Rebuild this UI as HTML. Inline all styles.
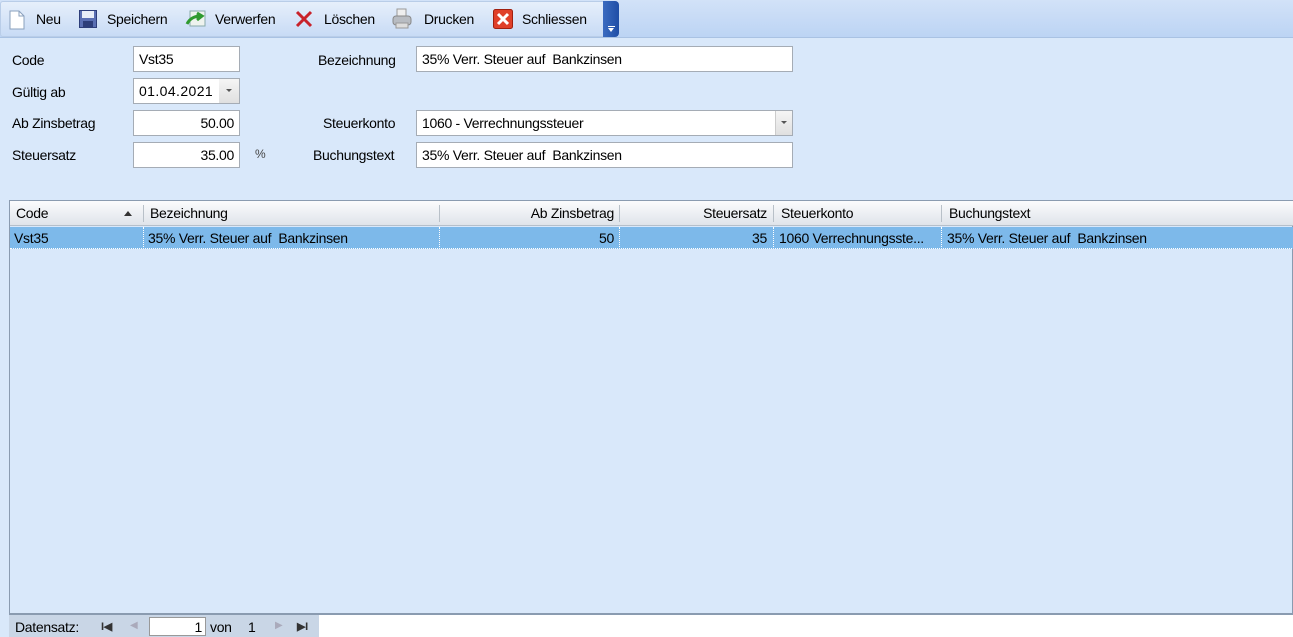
<!DOCTYPE html>
<html><head><meta charset="utf-8"><style>
*{box-sizing:border-box;margin:0;padding:0}
body{width:1293px;height:637px;overflow:hidden;background:#d9e8fa;font-family:"Liberation Sans",sans-serif;font-size:14px;color:#000;position:relative;letter-spacing:-0.3px}
.abs{position:absolute;white-space:nowrap}
#tb{position:absolute;left:0;top:0;width:1293px;height:38px;background:linear-gradient(#d2e2f8,#bcd4f4);border-bottom:1px solid #a9c2e3}
#tb2{position:absolute;left:0;top:1px;width:618px;height:36px;background:linear-gradient(#e6effb,#c8dbf5);border:1px solid #b9cde8;border-radius:3px}
#chev{position:absolute;left:603px;top:1px;width:16px;height:36px;background:linear-gradient(90deg,#3b6bc0,#1f4ea6);border-radius:0 4px 4px 0}
.inp{position:absolute;background:#fff;border:1px solid #a5acb5;height:26px;padding:4px 5px;white-space:nowrap}
.r{text-align:right}
#grid{position:absolute;left:9px;top:200px;width:1284px;height:414px;border:1px solid #8a9bb0;background:#d9e8fa}
#hdr{position:absolute;left:0;top:0;width:1284px;height:25px;background:linear-gradient(#fbfcfd,#dfe4ea);border-bottom:1px solid #b5bfca}
#row{position:absolute;left:0;top:26px;width:1284px;height:22px;background:#7db9ea;border-bottom:1px dotted #fff}
.c{position:absolute;top:4px;white-space:nowrap}
.sep{position:absolute;top:4px;width:1px;height:17px;background:#b8c0c8}
.rsep{position:absolute;top:0;height:22px;border-left:1px dotted #fff}
#ft{position:absolute;left:9px;top:614px;width:1284px;height:23px;background:#c9d6e6;border-top:1px solid #8a9bb0}
</style></head><body>
<div id="tb"></div><div id="tb2"></div><div id="chev"><div style="position:absolute;left:5px;top:25px;width:7px;height:1px;background:#fff"></div><div style="position:absolute;left:5px;top:27px;border-left:3.5px solid transparent;border-right:3.5px solid transparent;border-top:4px solid #fff"></div></div>
<svg class="abs" style="left:9px;top:10px" width="16" height="20"><path d="M1 1h9l5 5v13H1z" fill="#fff" stroke="#8aa0bd"/><path d="M10 1v5h5" fill="none" stroke="#8aa0bd"/></svg>
<div class="abs" style="left:36px;top:11px">Neu</div>
<svg class="abs" style="left:79px;top:10px" width="18" height="18"><rect x="0.5" y="0.5" width="17" height="17" fill="#5a6fb3" stroke="#2d3e7a"/><rect x="3" y="1" width="12" height="7" fill="#e8eef8"/><rect x="4" y="11" width="10" height="6" fill="#2d3e7a"/></svg>
<div class="abs" style="left:107px;top:11px">Speichern</div>
<svg class="abs" style="left:185px;top:9px" width="22" height="20"><rect x="5" y="2" width="15" height="15" fill="#eef3ee" stroke="#8aa"/><path d="M2 15c3-6 8-8 14-8M12 4l5 3-5 4" fill="none" stroke="#2f9a2f" stroke-width="3"/></svg>
<div class="abs" style="left:215px;top:11px">Verwerfen</div>
<svg class="abs" style="left:295px;top:10px" width="18" height="18"><path d="M2 2L16 16M16 2L2 16" stroke="#c8222a" stroke-width="3"/></svg>
<div class="abs" style="left:324px;top:11px">Löschen</div>
<svg class="abs" style="left:392px;top:8px" width="20" height="22"><rect x="5" y="1" width="9" height="7" fill="#eee" stroke="#999"/><rect x="1" y="8" width="18" height="9" rx="3" fill="#b8bcc2" stroke="#888"/><rect x="4" y="15" width="12" height="5" fill="#ddd" stroke="#999"/></svg>
<div class="abs" style="left:424px;top:11px">Drucken</div>
<svg class="abs" style="left:493px;top:9px" width="20" height="20"><rect x="0.5" y="0.5" width="19" height="19" rx="2" fill="#e0402a" stroke="#a02010"/><path d="M5 5l10 10M15 5L5 15" stroke="#fff" stroke-width="3"/></svg>
<div class="abs" style="left:522px;top:11px">Schliessen</div>

<div class="abs" style="left:12px;top:52px">Code</div>
<div class="inp" style="left:133px;top:46px;width:107px">Vst35</div>
<div class="abs" style="left:12px;top:84px">Gültig ab</div>
<div class="inp" style="left:133px;top:78px;width:107px;letter-spacing:0.4px">01.04.2021<div style="position:absolute;right:0;top:0;width:20px;height:24px;background:linear-gradient(#f5f5f5,#e0e0e0)"><div style="position:absolute;left:7px;top:10px;border-left:3px solid transparent;border-right:3px solid transparent;border-top:3px solid #555"></div></div></div>
<div class="abs" style="left:12px;top:115px">Ab Zinsbetrag</div>
<div class="inp r" style="left:133px;top:110px;width:107px">50.00</div>
<div class="abs" style="left:12px;top:147px">Steuersatz</div>
<div class="inp r" style="left:133px;top:142px;width:107px">35.00</div>
<div class="abs" style="left:255px;top:147px;font-size:12px;color:#444">%</div>

<div class="abs" style="left:318px;top:52px">Bezeichnung</div>
<div class="inp" style="left:416px;top:46px;width:377px">35% Verr. Steuer auf&nbsp; Bankzinsen</div>
<div class="abs" style="left:323px;top:115px">Steuerkonto</div>
<div class="inp" style="left:416px;top:110px;width:377px">1060 - Verrechnungssteuer<div style="position:absolute;right:0;top:0;width:17px;height:24px;background:linear-gradient(#f5f5f5,#e0e0e0);border-left:1px solid #ccc"><div style="position:absolute;left:5px;top:10px;border-left:3px solid transparent;border-right:3px solid transparent;border-top:3px solid #555"></div></div></div>
<div class="abs" style="left:313px;top:147px">Buchungstext</div>
<div class="inp" style="left:416px;top:142px;width:377px">35% Verr. Steuer auf&nbsp; Bankzinsen</div>

<div id="grid">
<div id="hdr">
<div class="c" style="left:6px">Code</div>
<div class="abs" style="left:114px;top:10px;border-left:4px solid transparent;border-right:4px solid transparent;border-bottom:5px solid #333"></div>
<div class="sep" style="left:133px"></div>
<div class="c" style="left:140px">Bezeichnung</div>
<div class="sep" style="left:429px"></div>
<div class="c" style="right:680px">Ab Zinsbetrag</div>
<div class="sep" style="left:609px"></div>
<div class="c" style="right:527px">Steuersatz</div>
<div class="sep" style="left:763px"></div>
<div class="c" style="left:771px">Steuerkonto</div>
<div class="sep" style="left:931px"></div>
<div class="c" style="left:939px">Buchungstext</div>
</div>
<div id="row">
<div class="c" style="left:4px;top:3px">Vst35</div>
<div class="rsep" style="left:133px"></div>
<div class="c" style="left:138px;top:3px">35% Verr. Steuer auf&nbsp; Bankzinsen</div>
<div class="rsep" style="left:429px"></div>
<div class="c" style="right:680px;top:3px">50</div>
<div class="rsep" style="left:609px"></div>
<div class="c" style="right:527px;top:3px">35</div>
<div class="rsep" style="left:763px"></div>
<div class="c" style="left:769px;top:3px">1060 Verrechnungsste...</div>
<div class="rsep" style="left:931px"></div>
<div class="c" style="left:937px;top:3px">35% Verr. Steuer auf&nbsp; Bankzinsen</div>
</div>
</div>
<div id="ft">
<div class="abs" style="left:6px;top:4px">Datensatz:</div>
<div class="abs" style="left:92px;top:5px;font-size:11px;color:#333;font-weight:bold">I◀</div>
<div class="abs" style="left:121px;top:5px;font-size:10px;color:#aab">◀</div>
<div style="position:absolute;left:140px;top:2px;width:57px;height:19px;background:#fff;border:1px solid #999;text-align:right;padding:1px 3px">1</div>
<div class="abs" style="left:201px;top:4px">von</div>
<div class="abs" style="left:239px;top:4px">1</div>
<div class="abs" style="left:266px;top:5px;font-size:10px;color:#aab">▶</div>
<div class="abs" style="left:288px;top:5px;font-size:11px;color:#333;font-weight:bold">▶I</div>
<div style="position:absolute;left:310px;top:0;width:974px;height:22px;background:#fff"></div>
</div>
</body></html>
